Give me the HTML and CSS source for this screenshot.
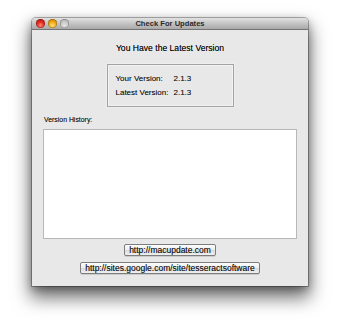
FILE: index.html
```html
<!DOCTYPE html>
<html>
<head>
<meta charset="utf-8">
<title>Check For Updates</title>
<link rel="stylesheet" href="styles.css">
</head>
<body>
<div class="window">
  <div class="titlebar">
    <div class="lights">
      <span class="light red"></span>
      <span class="light orange"></span>
      <span class="light gray"></span>
    </div>
    <div class="title">Check For Updates</div>
    <div></div>
  </div>
  <div class="content">
    <div class="heading">You Have the Latest Version</div>
    <div class="info">
      <span>Your Version:</span><span>2.1.3</span>
      <span>Latest Version:</span><span>2.1.3</span>
    </div>
    <div class="label">Version History:</div>
    <div class="history"></div>
    <button class="btn btn-first">http://macupdate.com</button>
    <button class="btn btn-second">http://sites.google.com/site/tesseractsoftware</button>
  </div>
</div>
</body>
</html>
```

FILE: styles.css
```css
html, body {
  margin: 0;
  padding: 0;
  background: #ffffff;
}
body {
  min-height: 323px;
  padding-top: 18px;
  box-sizing: border-box;
  font-family: "Liberation Sans", Arial, sans-serif;
  color: #1a1a1a;
}
.window {
  margin-left: 32px;
  width: 276px;
  height: 268px;
  background: #e8e8e8;
  border-radius: 4px 4px 0 0;
  box-shadow: 0 0 0 1px rgba(0,0,0,0.28), 0 10px 18px 2px rgba(0,0,0,0.55), 0 3px 8px rgba(0,0,0,0.3);
  display: flex;
  flex-direction: column;
  overflow: hidden;
}
.titlebar {
  box-sizing: border-box;
  height: 12px;
  background: linear-gradient(#e2e2e2, #c4c4c4 50%, #a9a9a9);
  border-bottom: 1px solid #737373;
  display: grid;
  grid-template-columns: 1fr auto 1fr;
  align-items: center;
}
.lights {
  display: flex;
  gap: 3px;
  padding-left: 4px;
  align-items: center;
}
.light {
  width: 9px;
  height: 9px;
  border-radius: 50%;
  box-shadow: inset 0 0 0 0.5px rgba(0,0,0,0.35);
}
.red {
  background: radial-gradient(circle at 50% 70%, #ff8a7a 0%, #e0281c 45%, #a30d08 100%);
}
.orange {
  background: radial-gradient(circle at 50% 70%, #ffe27a 0%, #f1a713 45%, #b86d00 100%);
}
.gray {
  background: radial-gradient(circle at 50% 70%, #e6e6e6 0%, #c4c4c4 50%, #9a9a9a 100%);
}
.title {
  font-size: 7.6px;
  font-weight: bold;
  color: #2b2b2b;
  line-height: 11px;
}
.content {
  flex: 1;
  display: flex;
  flex-direction: column;
  align-items: center;
  padding: 0 11px;
}
.heading {
  margin-top: 13px;
  font-size: 8.6px;
  line-height: 11px;
  color: #000;
  text-shadow: 0 0 0.3px rgba(0,0,0,0.45);
}
.info {
  box-sizing: border-box;
  margin-top: 10px;
  width: 127px;
  height: 43px;
  border: 1px solid #a3a3a3;
  box-shadow: inset 0 0 0 1px #f2f2f2, 0 0 0 0.5px #f4f4f4;
  padding: 7px 0 0 8px;
  display: grid;
  grid-template-columns: 58px auto;
  grid-auto-rows: 14px;
  font-size: 8px;
  line-height: 14px;
  color: #111;
  text-shadow: 0 0 0.25px rgba(0,0,0,0.35);
}
.label {
  align-self: stretch;
  margin-top: 8px;
  padding-left: 1px;
  font-size: 6.9px;
  line-height: 10px;
  color: #111;
  text-shadow: 0 0 0.25px rgba(0,0,0,0.4);
}
.history {
  align-self: stretch;
  box-sizing: border-box;
  margin-top: 4px;
  height: 110px;
  background: #ffffff;
  border: 1px solid #b8b8b8;
}
.btn {
  box-sizing: border-box;
  height: 12px;
  padding: 0 4px;
  border: 1px solid #7d7d7d;
  border-radius: 2px;
  background: linear-gradient(#fdfdfd, #ececec 50%, #dcdcdc 55%, #f0f0f0);
  box-shadow: 0 1px 0 rgba(0,0,0,0.12);
  font-family: "Liberation Sans", Arial, sans-serif;
  font-size: 8.5px;
  line-height: 10px;
  color: #111;
  text-shadow: 0 0 0.25px rgba(0,0,0,0.4);
}
.btn-first {
  margin-top: 5px;
}
.btn-second {
  margin-top: 6px;
}
```
